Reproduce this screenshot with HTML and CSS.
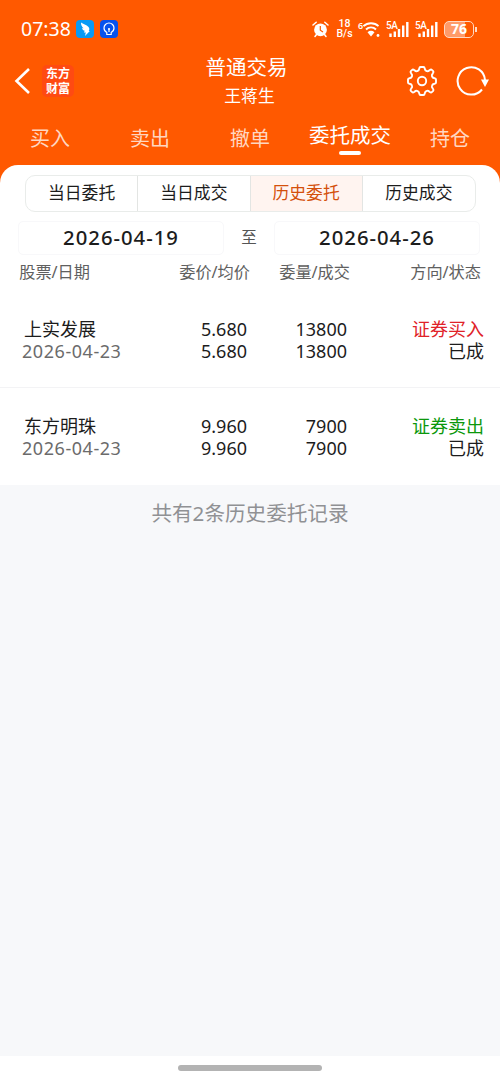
FILE: index.html
```html
<!DOCTYPE html>
<html lang="zh-CN">
<head>
    <meta charset="UTF-8">
    <meta name="viewport" content="width=device-width, initial-scale=1.0">
    <title>普通交易</title>
    <link rel="stylesheet" href="styles.css">
</head>
<body>
    <header class="header">
        <div class="status-bar">
            <span class="time">07:38</span>
            <svg class="app-icon" width="18" height="18" viewBox="0 0 18 18">
                <rect width="18" height="18" rx="4" fill="#079af5"/>
                <path d="M5 2.500C7 4 10.500 4.500 12.500 7C13.700 8.300 13.400 10 12.700 11H13.800L9 16L9.800 12.600H7.800L8.800 10.800C7.300 10.300 6.200 9.300 5.900 8.200L7.600 8.200C6 7 4.800 5 5 2.500Z" fill="#fff"/>
            </svg>
            <svg class="app-icon" width="18" height="18" viewBox="0 0 18 18">
                <rect width="18" height="18" rx="4" fill="#0752ee"/>
                <path d="M6.800 14.500V12.500C5 11.500 4 10 4 8A5 5 0 0 1 14 8C14 10 13 11.500 11.200 12.500V14.500ZM9 9.500V12" fill="none" stroke="#fff" stroke-width="1.200"/>
                <circle cx="9" cy="9" r="1.100" fill="#fff"/>
            </svg>

            <div class="status-right">
                <svg class="alarm" width="17" height="17" viewBox="0 0 17 17">
                    <circle cx="8.500" cy="8.800" r="6.400" fill="#fff"/>
                    <path d="M1 4L4.200 1.200M16 4L12.800 1.200M4.500 13.500L3 15.500M12.500 13.500L14 15.500" stroke="#fff" stroke-width="1.500" stroke-linecap="round"/>
                    <path d="M8.300 5V9.200L11 11" fill="none" stroke="#ff5900" stroke-width="1.200"/>
                </svg>
                <div class="speed"><span>18</span><span>B/s</span></div>
                <div class="wifi">
                    <span>6</span>
                    <svg width="17" height="17" viewBox="0 0 17 17">
                        <path d="M0.500 5.200C4.500 1.200 11.500 1.200 15.500 5.200M3 8.500C5.800 5.600 10.200 5.600 13 8.500" fill="none" stroke="#fff" stroke-width="1.900"/>
                        <path d="M4.500 11.200Q8 8.500 11.500 11.200L8 15.500Z" fill="#fff"/>
                        <circle cx="15" cy="14.500" r="1.400" fill="#fff"/>
                    </svg>
                </div>
                <div class="signal">
                    <span>5A</span>
                    <svg width="23" height="17" viewBox="0 0 23 17">
                        <path d="M4.500 12.500V16M8.800 10.500V16M13 8V16M17.200 4.500V16M21.300 1V16" stroke="#fff" stroke-width="2.400"/>
                    </svg>
                </div>
                <div class="signal">
                    <span>5A</span>
                    <svg width="23" height="17" viewBox="0 0 23 17">
                        <path d="M4.500 12.500V16M8.800 10.500V16M13 8V16M17.200 4.500V16M21.300 1V16" stroke="#fff" stroke-width="2.400"/>
                    </svg>
                </div>
                <div class="battery"><span>76</span></div>
            </div>
        </div>

        <div class="title-bar">
            <div class="title-left">
                <svg width="17" height="28" viewBox="0 0 17 28">
                    <path d="M15 2L2.500 14L15 26" fill="none" stroke="#fff" stroke-width="2.600"/>
                </svg>
                <div class="logo"><span>东方</span><span>财富</span></div>
            </div>
            <div class="title">
                <h1>普通交易</h1>
                <p>王蒋生</p>
            </div>
            <div class="title-right">
                <svg width="32" height="32" viewBox="0 0 32 32" fill="none" stroke="#fff" stroke-width="1.900" stroke-linejoin="round">
                    <path d="M14.500 2H17.500Q18.500 2 18.700 3.500Q19 5.500 20.600 6Q22 6.600 23.500 5.200Q25 4 25.800 4.800L27.200 6.200Q28 7 26.800 8.500Q25.400 10 26 11.400Q26.500 13 28.500 13.300Q30 13.500 30 14.500V17.500Q30 18.500 28.500 18.700Q26.500 19 26 20.600Q25.400 22 26.800 23.500Q28 25 27.200 25.800L25.800 27.200Q25 28 23.500 26.800Q22 25.400 20.600 26Q19 26.500 18.700 28.500Q18.500 30 17.500 30H14.500Q13.500 30 13.300 28.500Q13 26.500 11.400 26Q10 25.400 8.500 26.800Q7 28 6.200 27.200L4.800 25.800Q4 25 5.200 23.500Q6.600 22 6 20.600Q5.500 19 3.500 18.700Q2 18.500 2 17.500V14.500Q2 13.500 3.500 13.300Q5.500 13 6 11.400Q6.600 10 5.200 8.500Q4 7 4.800 6.200L6.200 4.800Q7 4 8.500 5.200Q10 6.600 11.400 6Q13 5.500 13.300 3.500Q13.500 2 14.500 2Z"/>
                    <circle cx="16" cy="16" r="4.200"/>
                </svg>
                <svg width="34" height="32" viewBox="0 0 34 32">
                    <path d="M27 24.500A13.700 13.700 0 1 1 30 15" fill="none" stroke="#fff" stroke-width="2"/>
                    <path d="M26 14.500H34L30 22Z" fill="#fff"/>
                </svg>
            </div>
        </div>

        <nav class="tabs">
            <a>买入</a>
            <a>卖出</a>
            <a>撤单</a>
            <a class="active">委托成交</a>
            <a>持仓</a>
        </nav>
    </header>

    <main class="panel">
        <div class="segments">
            <span>当日委托</span>
            <span>当日成交</span>
            <span class="active">历史委托</span>
            <span>历史成交</span>
        </div>

        <div class="date-range">
            <div class="date-box">2026-04-19</div>
            <span>至</span>
            <div class="date-box">2026-04-26</div>
        </div>

        <div class="list-head">
            <span>股票/日期</span>
            <span>委价/均价</span>
            <span>委量/成交</span>
            <span>方向/状态</span>
        </div>

        <div class="order">
            <div class="stock"><p class="name">上实发展</p><p class="date">2026-04-23</p></div>
            <div class="num"><p>5.680</p><p>5.680</p></div>
            <div class="num"><p>13800</p><p>13800</p></div>
            <div class="state"><p class="buy">证券买入</p><p>已成</p></div>
        </div>
        <div class="order">
            <div class="stock"><p class="name">东方明珠</p><p class="date">2026-04-23</p></div>
            <div class="num"><p>9.960</p><p>9.960</p></div>
            <div class="num"><p>7900</p><p>7900</p></div>
            <div class="state"><p class="sell">证券卖出</p><p>已成</p></div>
        </div>
    </main>

    <p class="summary">共有2条历史委托记录</p>

    <footer class="home-bar"><div></div></footer>
</body>
</html>
```

FILE: styles.css
```css
* {
    margin: 0;
    padding: 0;
    box-sizing: border-box;
}

body {
    height: 1079px;
    display: flex;
    flex-direction: column;
    background: #f7f8fa;
    color: #1c1c1c;
    font-family: 'Noto Sans', 'Noto Sans CJK SC', sans-serif;
    overflow: hidden;
}

svg {
    display: block;
    flex-shrink: 0;
}

/* header */
.header {
    height: 189px;
    flex-shrink: 0;
    background: #ff5900;
    color: #fff;
}

.status-bar {
    height: 58px;
    display: flex;
    align-items: center;
    padding-left: 21px;
    padding-right: 23px;
}

.time {
    width: 55px;
    margin-top: -1px;
    font-size: 19.5px;
}

.app-icon {
    margin-right: 6px;
}

.status-right {
    margin-left: auto;
    display: flex;
    align-items: center;
}

.speed {
    width: 17px;
    margin-left: 7px;
    display: flex;
    flex-direction: column;
    align-items: center;
    font-family: Roboto, sans-serif;
    font-size: 10.5px;
    font-weight: 500;
    line-height: 10px;
}

.wifi {
    display: flex;
    margin-left: 5px;
}

.wifi span {
    width: 5px;
    font-size: 9px;
    font-weight: 600;
    line-height: 9px;
}

.signal {
    display: grid;
    width: 23px;
    margin-left: 6px;
}

.signal span,
.signal svg {
    grid-area: 1 / 1;
}

.signal span {
    font-family: Roboto, sans-serif;
    font-size: 10px;
    font-weight: 500;
    line-height: 9px;
    letter-spacing: -0.5px;
}

.battery {
    display: flex;
    align-items: center;
    margin-left: 6px;
}

.battery span {
    width: 30px;
    height: 17px;
    border: 1.5px solid #ffd9c4;
    border-radius: 5px;
    background: linear-gradient(90deg, #ff9b69 72%, #ff5900 72%);
    font-size: 14px;
    font-weight: 700;
    line-height: 14px;
    text-align: center;
}

.battery::after {
    content: "";
    width: 2px;
    height: 5px;
    margin-left: 1px;
    background: #ffd9c4;
}

.title-bar {
    height: 54px;
    display: grid;
    grid-template-columns: 94px 1fr 94px;
}

.title-left {
    display: flex;
    align-items: center;
    padding-left: 14px;
    padding-bottom: 8px;
}

.logo {
    width: 32px;
    height: 32px;
    margin-left: 11px;
    padding-top: 1px;
    border-radius: 5px;
    background: #ff4a12;
    display: flex;
    flex-direction: column;
    align-items: center;
    font-family: 'Noto Sans CJK SC', sans-serif;
    font-size: 12px;
    font-weight: 700;
    line-height: 14.5px;
}

.title {
    text-align: center;
    padding-right: 1px;
}

.title h1 {
    margin-left: -6px;
    font-size: 20.5px;
    font-weight: 400;
    line-height: 18px;
}

.title p {
    margin-top: 10px;
    font-size: 16.8px;
    line-height: 20px;
}

.title-right {
    display: flex;
    align-items: center;
    gap: 17px;
    padding-bottom: 8px;
}

.tabs {
    display: grid;
    grid-template-columns: repeat(5, 1fr);
    text-align: center;
    font-size: 20px;
    line-height: 28px;
    padding-top: 13px;
    color: #ffd7c1;
}

.tabs .active {
    margin-top: -4px;
    color: #fff;
    font-size: 20.5px;
    white-space: nowrap;
}

.tabs .active::after {
    content: "";
    display: block;
    width: 22px;
    height: 4px;
    margin: 2px auto 0;
    border-radius: 2px;
    background: #fff;
}

/* orders */
.panel {
    flex-shrink: 0;
    height: 320px;
    margin-top: -24px;
    padding-top: 10px;
    border-radius: 18px 18px 0 0;
    background: #fff;
}

.segments {
    display: grid;
    grid-template-columns: repeat(4, 1fr);
    height: 37px;
    margin: 0 24px 0 25px;
    border: 1px solid #e9ecea;
    border-radius: 10px;
    overflow: hidden;
}

.segments span {
    font-size: 16.8px;
    line-height: 34px;
    text-align: center;
    border-right: 1px solid #e3e5e3;
}

.segments span:last-child {
    border-right: none;
}

.segments .active {
    background: #fff4f0;
    color: #d4500c;
}

.date-range {
    display: grid;
    grid-template-columns: 206px 1fr 206px;
    height: 34px;
    margin: 9px 20px 0 18px;
    text-align: center;
    color: #555;
    font-size: 15.5px;
    line-height: 32px;
}

.date-box {
    border: 1px solid #f8f8fa;
    border-radius: 5px;
    color: #1c1c1c;
    font-size: 20.3px;
    font-weight: 500;
    line-height: 30px;
    letter-spacing: 1px;
}

.list-head {
    display: grid;
    grid-template-columns: 90px 160px 100px 131px;
    height: 35px;
    font-size: 16.2px;
    line-height: 35px;
    text-align: right;
    color: #606060;
}

.order {
    display: grid;
    grid-template-columns: 187px 60px 100px 137px;
    height: 98px;
    padding-top: 28px;
    font-size: 18px;
    line-height: 22px;
    text-align: right;
    border-bottom: 1px solid #f3f3f5;
}

.order + .order {
    height: 97px;
    padding-top: 27px;
    border-bottom: none;
}

.stock {
    padding-left: 22px;
    text-align: left;
}

.name {
    padding-left: 2px;
}

.date {
    color: #6b6b6b;
    letter-spacing: 0.55px;
}

.buy {
    color: #e02228;
}

.sell {
    color: #0b970b;
}

.summary {
    padding-top: 14px;
    color: #909194;
    font-size: 20.6px;
    line-height: 29px;
    text-align: center;
}

.home-bar {
    height: 23px;
    margin-top: auto;
    padding-top: 9px;
    background: #fff;
}

.home-bar div {
    width: 144px;
    height: 6px;
    margin: 0 auto;
    border-radius: 3px;
    background: #b3b3b3;
}
```
